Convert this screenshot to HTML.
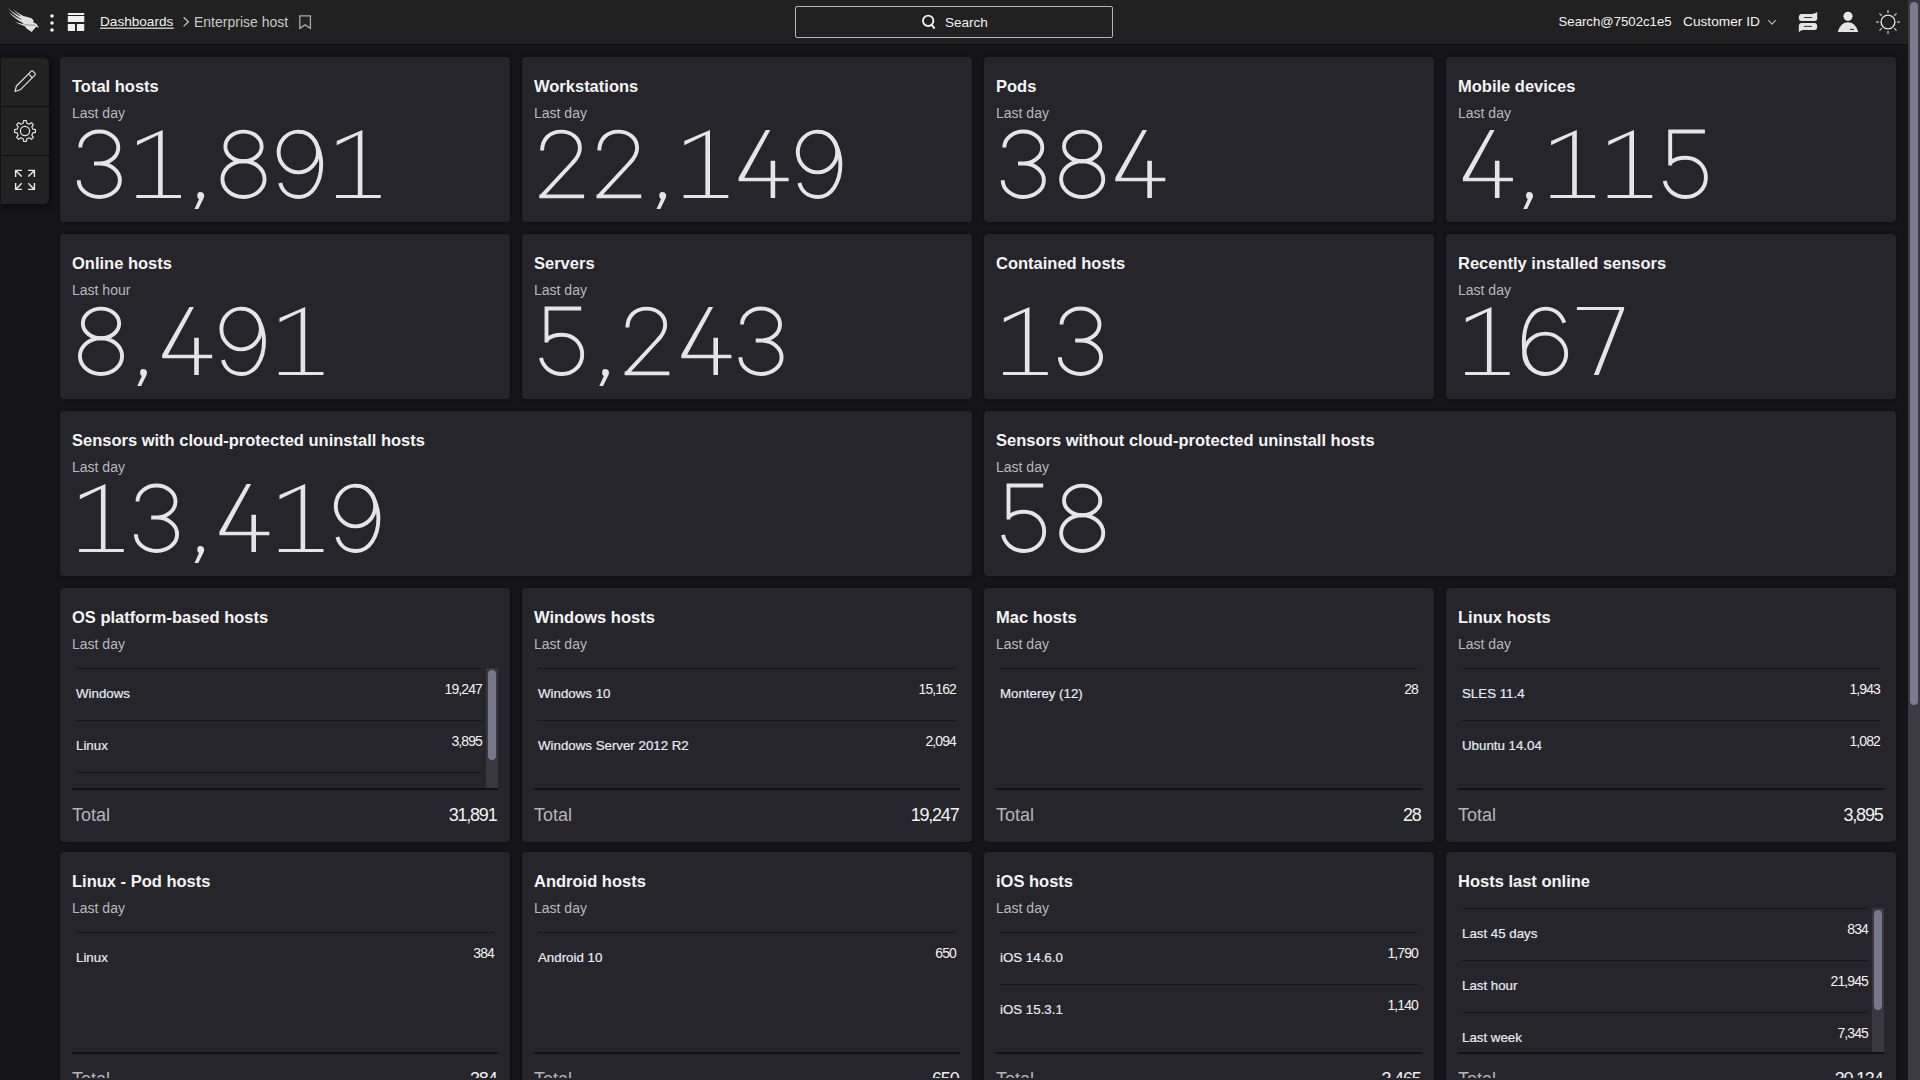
<!DOCTYPE html>
<html><head><meta charset="utf-8"><style>
*{margin:0;padding:0;box-sizing:border-box}
html,body{width:1920px;height:1080px;overflow:hidden;background:#141419;font-family:"Liberation Sans",sans-serif;color:#ececec}
#top{position:absolute;left:0;top:0;width:1908px;height:45px;background:#212121;border-bottom:1px solid #0c0c0f}
.t{position:absolute;white-space:nowrap;line-height:1}
#side{position:absolute;left:1px;top:58px;width:48px;height:146px;background:#222222;border-radius:0 5px 5px 0;box-shadow:2px 2px 6px rgba(0,0,0,.45)}
#side .dv{position:absolute;left:0;width:48px;height:1px;background:#101013}
.card{position:absolute;background:#26252b;border-radius:4px;overflow:hidden;box-shadow:0 0 3px rgba(0,0,0,.35)}
.ttl{position:absolute;left:12px;top:19.7px;font-weight:bold;font-size:16.5px;line-height:19px;color:#f4f4f4;white-space:nowrap}
.sub{position:absolute;left:12px;top:48px;font-size:14px;line-height:16px;color:#b9b9bd;white-space:nowrap}
.list{position:absolute;left:12px;width:426px;overflow:hidden}
.row{position:absolute;left:4px;right:4px;height:52px;border-top:1px solid #17171b}
.list.sc .row{right:16px}
.lab{position:absolute;left:0;top:16.5px;font-size:13.3px;line-height:15px;color:#e8eaf4;white-space:nowrap;-webkit-text-stroke:0.2px #e8eaf4}
.val{position:absolute;right:0;top:13px;font-size:14px;line-height:15px;color:#f2f2f2;white-space:nowrap;letter-spacing:-0.9px}
.strack{position:absolute;right:0;top:0;width:12px;height:100%;background:#38383e}
.sthumb{position:absolute;right:2px;top:2px;width:8px;border-radius:4px;background:#77778b}
.tsep{position:absolute;left:12px;top:199.5px;width:426px;height:2px;background:#121215}
.tot{position:absolute;left:12px;top:217px;font-size:18px;line-height:20px;color:#b4b4b8}
.totv{position:absolute;right:13.5px;top:217px;font-size:18px;line-height:20px;color:#f2f2f2;letter-spacing:-1.2px}
#big{position:absolute;left:0;top:0}
#big path,#big ellipse{stroke:#e5e5e7;fill:none}
#big path.f{stroke:none;fill:#e5e5e7}
#sb{position:absolute;left:1908px;top:0;width:12px;height:1080px;background:#3a3a40}
#sbt{position:absolute;left:1910px;top:2px;width:8px;height:703px;border-radius:4px;background:#7a7a90}
</style></head><body>
<div id="top">
 <div class="t" style="left:100px;top:15px;font-size:13.6px;color:#f2f2f2">Dashboards</div>
 <div class="t" style="left:194px;top:15px;font-size:14px;color:#c9c9c9">Enterprise host</div>
 <div id="search" style="position:absolute;left:795px;top:6px;width:318px;height:32px;border:1px solid #b4b4b4;border-radius:2px"></div>
 <div class="t" style="left:945px;top:15.5px;font-size:13.5px;color:#f2f2f2">Search</div>
 <div class="t" style="left:1558.5px;top:15px;font-size:13.2px;color:#f2f2f2">Search@7502c1e5</div>
 <div class="t" style="left:1683px;top:15px;font-size:13.7px;color:#f2f2f2">Customer ID</div>
</div>
<div id="side"><div class="dv" style="top:48px"></div><div class="dv" style="top:97px"></div></div>

<svg style="position:absolute;left:0;top:0" width="1920" height="210" viewBox="0 0 1920 210">
 <g fill="#e2e2e2">
  <path d="M20.59,15.56 L26.52,16.74 L31.56,18.22 L33.63,20.59 L33.19,22.22 L36.30,23.85 L39.11,27.70 L36.00,26.81 L34.81,28.59 L33.63,29.48 L31.85,32.00 L29.78,30.67 L26.52,28.59 L24.74,25.93 L22.96,23.26 L21.78,20.59 Z"/>
  <path d="M7.85,7.85 Q13.78,13.78 22.07,17.04 L21.78,19.41 Q13.78,15.26 7.85,7.85 Z"/>
  <path d="M12.89,9.33 Q17.33,12.89 22.96,15.85 L22.37,17.33 Q17.04,13.78 12.89,9.33 Z"/>
  <path d="M9.04,12.30 Q15.85,17.93 22.96,20.59 L22.96,22.96 Q15.26,19.41 9.04,12.30 Z"/>
  <path d="M14.96,22.07 Q20.30,23.26 25.33,24.74 L25.63,26.52 Q20.00,24.74 14.96,22.07 Z"/>
 </g>
 <path d="M24.44,24.74 L35.41,25.33" stroke="#555" stroke-width="0.6"/>
 <g fill="#f0f0f0">
  <circle cx="52" cy="16" r="1.8"/><circle cx="52" cy="23" r="1.8"/><circle cx="52" cy="30" r="1.8"/>
  <rect x="67.8" y="12.9" width="16.5" height="2.1" rx="0.4"/>
  <rect x="67.8" y="16" width="16.5" height="6" rx="0.5"/>
  <rect x="67.8" y="23.9" width="7.2" height="7.1" rx="0.5"/>
  <rect x="76.9" y="23.9" width="7.35" height="7.1" rx="0.5"/>
 </g>
 <path d="M183.6,17.2 L188.4,21.8 L183.6,26.4" stroke="#c8c8c8" stroke-width="1.2" fill="none"/>
 <path d="M299.8,15.8 H310.4 V28.4 L305.1,24.9 L299.8,28.4 Z" stroke="#a9a9a9" stroke-width="1.3" fill="none" stroke-linejoin="miter"/>
 <rect x="100" y="27.6" width="73.8" height="1.2" fill="#e8e8e8"/>
 <circle cx="928.2" cy="20.8" r="5.2" stroke="#f0f0f0" stroke-width="1.9" fill="none"/>
 <path d="M931.6,24.6 L934.6,28.6" stroke="#f0f0f0" stroke-width="2" fill="none"/>
 <path d="M1768.3,20.2 L1772,24.2 L1775.7,20.2" stroke="#c0c0c0" stroke-width="1.1" fill="none"/>
 <g fill="#e4e4e4">
  <path d="M1801.5,14 H1811 Q1815,14 1817.2,11.9 V18.5 Q1817.2,21 1814.5,21 H1801.5 Q1798.8,21 1798.8,17.5 Q1798.8,14 1801.5,14 Z"/>
  <path d="M1801.5,23 H1814.5 Q1817.2,23 1817.2,26.5 Q1817.2,30 1814.5,30 H1803 Q1800,30.3 1798.8,32.2 V26.5 Q1798.8,23 1801.5,23 Z"/>
 </g>
 <g stroke="#1f1f1f" stroke-width="0.9"><path d="M1804,17.5 H1812"/><path d="M1804,26.4 H1812"/></g>
 <circle cx="1848" cy="16.3" r="4.6" fill="#e4e4e4"/>
 <path d="M1837.8,32 Q1840.5,22.2 1848,22.2 Q1855.5,22.2 1858.2,32 Z" fill="#e4e4e4"/>
 <path d="M1850,29.4 H1854" stroke="#1f1f1f" stroke-width="1"/>
 <circle cx="1888" cy="22" r="6.9" stroke="#e4e4e4" stroke-width="1.4" fill="none"/>
 <g stroke="#bdbdbd" stroke-width="1.3">
  <path d="M1888,10 V13"/><path d="M1888,31 V34"/><path d="M1876,22 H1879"/><path d="M1897,22 H1900"/>
  <path d="M1879.4,13.4 L1881.8,15.8"/><path d="M1894.2,28.2 L1896.6,30.6"/><path d="M1896.6,13.4 L1894.2,15.8"/><path d="M1881.8,28.2 L1879.4,30.6"/>
 </g>
 <g stroke="#e0e0e0" stroke-width="1.2" fill="none" stroke-linejoin="round">
  <path d="M16.4,86 L31.1,71.3 Q32.1,70.4 33.1,71.3 L34.9,73.1 Q35.8,74.1 34.9,75.1 L20.2,89.8 L15,91.5 Z"/>
  <path d="M28.5,73.9 L32.1,77.5"/>
  <path d="M23.13,123.22 L23.60,120.59 L26.40,120.59 L26.87,123.22 L29.18,124.18 L31.37,122.65 L33.35,124.63 L31.82,126.82 L32.78,129.13 L35.41,129.60 L35.41,132.40 L32.78,132.87 L31.82,135.18 L33.35,137.37 L31.37,139.35 L29.18,137.82 L26.87,138.78 L26.40,141.41 L23.60,141.41 L23.13,138.78 L20.82,137.82 L18.63,139.35 L16.65,137.37 L18.18,135.18 L17.22,132.87 L14.59,132.40 L14.59,129.60 L17.22,129.13 L18.18,126.82 L16.65,124.63 L18.63,122.65 L20.82,124.18 Z"/>
  <circle cx="25" cy="131" r="4.6"/>
 </g>
 <g stroke="#ececec" stroke-width="1.4" fill="none">
  <path d="M15.6,176.9 V170.4 H21.9 M15.6,170.4 L21.7,176.5"/>
  <path d="M28.1,170.4 H34.4 V176.9 M34.4,170.4 L28.3,176.5"/>
  <path d="M15.6,183.1 V189.4 H21.9 M15.6,189.4 L21.7,183.3"/>
  <path d="M28.1,189.4 H34.4 V183.1 M34.4,189.4 L28.3,183.3"/>
 </g>
</svg>
<div class="card" style="left:60px;top:57px;width:450px;height:165px"><div class="ttl">Total hosts</div><div class="sub">Last day</div></div>
<div class="card" style="left:522px;top:57px;width:450px;height:165px"><div class="ttl">Workstations</div><div class="sub">Last day</div></div>
<div class="card" style="left:984px;top:57px;width:450px;height:165px"><div class="ttl">Pods</div><div class="sub">Last day</div></div>
<div class="card" style="left:1446px;top:57px;width:450px;height:165px"><div class="ttl">Mobile devices</div><div class="sub">Last day</div></div>
<div class="card" style="left:60px;top:234px;width:450px;height:165px"><div class="ttl">Online hosts</div><div class="sub">Last hour</div></div>
<div class="card" style="left:522px;top:234px;width:450px;height:165px"><div class="ttl">Servers</div><div class="sub">Last day</div></div>
<div class="card" style="left:984px;top:234px;width:450px;height:165px"><div class="ttl">Contained hosts</div><div class="sub"></div></div>
<div class="card" style="left:1446px;top:234px;width:450px;height:165px"><div class="ttl">Recently installed sensors</div><div class="sub">Last day</div></div>
<div class="card" style="left:60px;top:411px;width:912px;height:165px"><div class="ttl">Sensors with cloud-protected uninstall hosts</div><div class="sub">Last day</div></div>
<div class="card" style="left:984px;top:411px;width:912px;height:165px"><div class="ttl">Sensors without cloud-protected uninstall hosts</div><div class="sub">Last day</div></div>
<div class="card" style="left:60px;top:588px;width:450px;height:254px"><div class="ttl">OS platform-based hosts</div><div class="sub">Last day</div><div class="list sc" style="top:80px;height:120px"><div class="row" style="top:0px"><span class="lab">Windows</span><span class="val">19,247</span></div><div class="row" style="top:52px"><span class="lab">Linux</span><span class="val">3,895</span></div><div class="row" style="top:104px"><span class="lab">Mac</span><span class="val">28</span></div><div class="strack"></div><div class="sthumb" style="height:90px"></div></div><div class="tsep"></div><div class="tot">Total</div><div class="totv">31,891</div></div>
<div class="card" style="left:522px;top:588px;width:450px;height:254px"><div class="ttl">Windows hosts</div><div class="sub">Last day</div><div class="list" style="top:80px;height:120px"><div class="row" style="top:0px"><span class="lab">Windows 10</span><span class="val">15,162</span></div><div class="row" style="top:52px"><span class="lab">Windows Server 2012 R2</span><span class="val">2,094</span></div></div><div class="tsep"></div><div class="tot">Total</div><div class="totv">19,247</div></div>
<div class="card" style="left:984px;top:588px;width:450px;height:254px"><div class="ttl">Mac hosts</div><div class="sub">Last day</div><div class="list" style="top:80px;height:120px"><div class="row" style="top:0px"><span class="lab">Monterey (12)</span><span class="val">28</span></div></div><div class="tsep"></div><div class="tot">Total</div><div class="totv">28</div></div>
<div class="card" style="left:1446px;top:588px;width:450px;height:254px"><div class="ttl">Linux hosts</div><div class="sub">Last day</div><div class="list" style="top:80px;height:120px"><div class="row" style="top:0px"><span class="lab">SLES 11.4</span><span class="val">1,943</span></div><div class="row" style="top:52px"><span class="lab">Ubuntu 14.04</span><span class="val">1,082</span></div></div><div class="tsep"></div><div class="tot">Total</div><div class="totv">3,895</div></div>
<div class="card" style="left:60px;top:852px;width:450px;height:254px"><div class="ttl">Linux - Pod hosts</div><div class="sub">Last day</div><div class="list" style="top:80px;height:120px"><div class="row" style="top:0px"><span class="lab">Linux</span><span class="val">384</span></div></div><div class="tsep"></div><div class="tot">Total</div><div class="totv">384</div></div>
<div class="card" style="left:522px;top:852px;width:450px;height:254px"><div class="ttl">Android hosts</div><div class="sub">Last day</div><div class="list" style="top:80px;height:120px"><div class="row" style="top:0px"><span class="lab">Android 10</span><span class="val">650</span></div></div><div class="tsep"></div><div class="tot">Total</div><div class="totv">650</div></div>
<div class="card" style="left:984px;top:852px;width:450px;height:254px"><div class="ttl">iOS hosts</div><div class="sub">Last day</div><div class="list" style="top:80px;height:120px"><div class="row" style="top:0px"><span class="lab">iOS 14.6.0</span><span class="val">1,790</span></div><div class="row" style="top:52px"><span class="lab">iOS 15.3.1</span><span class="val">1,140</span></div></div><div class="tsep"></div><div class="tot">Total</div><div class="totv">3,465</div></div>
<div class="card" style="left:1446px;top:852px;width:450px;height:254px"><div class="ttl">Hosts last online</div><div class="sub"></div><div class="list sc" style="top:56px;height:144px"><div class="row" style="top:0px"><span class="lab">Last 45 days</span><span class="val">834</span></div><div class="row" style="top:52px"><span class="lab">Last hour</span><span class="val">21,945</span></div><div class="row" style="top:104px"><span class="lab">Last week</span><span class="val">7,345</span></div><div class="strack"></div><div class="sthumb" style="height:100px"></div></div><div class="tsep"></div><div class="tot">Total</div><div class="totv">30,134</div></div>
<svg id="big" width="1920" height="1080" viewBox="0 0 1920 1080" style="stroke-width:3.90"><g transform="translate(72.00,126.00)"><path d="M8.3,21.5 A19,16 0 1 1 27.3,37.5 M22,37.5 H27.3 A20.6,16.75 0 1 1 6.7,54.25" fill="none"/></g><g transform="translate(129.20,126.00)"><path class="f" d="M33.5,3.9 V69 H51.8 V72.1 H7.1 V69 H28.9 V9.0 L7.8,19.3 V14.9 Z"/></g><g transform="translate(186.40,126.00)"><path class="f" d="M13.5,65.9 C16.5,65.9 17.8,67.5 17.8,69.5 C17.8,71 17.3,72 16.6,73.5 L11.9,83 H8.1 L12.6,73 C11.5,72.5 10.9,71.3 10.9,69.3 C10.9,67.3 11.9,65.9 13.5,65.9 Z"/></g><g transform="translate(214.50,126.00)"><ellipse cx="29" cy="20.4" rx="18.15" ry="14.8" fill="none"/><ellipse cx="29" cy="53.1" rx="21.1" ry="17.9" fill="none"/></g><g transform="translate(271.70,126.00)"><ellipse cx="26.6" cy="26" rx="19.7" ry="20.4" fill="none"/><path d="M26.6,5.6 A19.7,20.4 0 0 1 43.7,16 C46.6,21.4 49.5,28 49.5,38 C49.5,57 40,71 27.5,71 C17,71 10.5,65 8.5,57" fill="none"/></g><g transform="translate(328.90,126.00)"><path class="f" d="M33.5,3.9 V69 H51.8 V72.1 H7.1 V69 H28.9 V9.0 L7.8,19.3 V14.9 Z"/></g><g transform="translate(534.00,126.00)"><path d="M8.1,24.6 C8.1,13 16,5.6 27,5.6 C38,5.6 45.9,12.5 45.9,22 C45.9,28 43,32.5 38,37.5 L7.5,70.35 M5.3,70.35 H50.1" fill="none"/></g><g transform="translate(591.20,126.00)"><path d="M8.1,24.6 C8.1,13 16,5.6 27,5.6 C38,5.6 45.9,12.5 45.9,22 C45.9,28 43,32.5 38,37.5 L7.5,70.35 M5.3,70.35 H50.1" fill="none"/></g><g transform="translate(648.40,126.00)"><path class="f" d="M13.5,65.9 C16.5,65.9 17.8,67.5 17.8,69.5 C17.8,71 17.3,72 16.6,73.5 L11.9,83 H8.1 L12.6,73 C11.5,72.5 10.9,71.3 10.9,69.3 C10.9,67.3 11.9,65.9 13.5,65.9 Z"/></g><g transform="translate(676.50,126.00)"><path class="f" d="M33.5,3.9 V69 H51.8 V72.1 H7.1 V69 H28.9 V9.0 L7.8,19.3 V14.9 Z"/></g><g transform="translate(733.70,126.00)"><path class="f" d="M32.1,3.9 H36.6 L10.6,51.7 H36.9 V34.8 H41.5 V51.7 H54.9 V55.2 H41.5 V72.1 H36.9 V55.2 H4.9 V51.7 Z"/></g><g transform="translate(790.90,126.00)"><ellipse cx="26.6" cy="26" rx="19.7" ry="20.4" fill="none"/><path d="M26.6,5.6 A19.7,20.4 0 0 1 43.7,16 C46.6,21.4 49.5,28 49.5,38 C49.5,57 40,71 27.5,71 C17,71 10.5,65 8.5,57" fill="none"/></g><g transform="translate(996.00,126.00)"><path d="M8.3,21.5 A19,16 0 1 1 27.3,37.5 M22,37.5 H27.3 A20.6,16.75 0 1 1 6.7,54.25" fill="none"/></g><g transform="translate(1053.20,126.00)"><ellipse cx="29" cy="20.4" rx="18.15" ry="14.8" fill="none"/><ellipse cx="29" cy="53.1" rx="21.1" ry="17.9" fill="none"/></g><g transform="translate(1110.40,126.00)"><path class="f" d="M32.1,3.9 H36.6 L10.6,51.7 H36.9 V34.8 H41.5 V51.7 H54.9 V55.2 H41.5 V72.1 H36.9 V55.2 H4.9 V51.7 Z"/></g><g transform="translate(1458.00,126.00)"><path class="f" d="M32.1,3.9 H36.6 L10.6,51.7 H36.9 V34.8 H41.5 V51.7 H54.9 V55.2 H41.5 V72.1 H36.9 V55.2 H4.9 V51.7 Z"/></g><g transform="translate(1515.20,126.00)"><path class="f" d="M13.5,65.9 C16.5,65.9 17.8,67.5 17.8,69.5 C17.8,71 17.3,72 16.6,73.5 L11.9,83 H8.1 L12.6,73 C11.5,72.5 10.9,71.3 10.9,69.3 C10.9,67.3 11.9,65.9 13.5,65.9 Z"/></g><g transform="translate(1543.30,126.00)"><path class="f" d="M33.5,3.9 V69 H51.8 V72.1 H7.1 V69 H28.9 V9.0 L7.8,19.3 V14.9 Z"/></g><g transform="translate(1600.50,126.00)"><path class="f" d="M33.5,3.9 V69 H51.8 V72.1 H7.1 V69 H28.9 V9.0 L7.8,19.3 V14.9 Z"/></g><g transform="translate(1657.70,126.00)"><path d="M47.2,5.45 H12.5 V39.5 M12.9,36.6 C16.5,33.3 21.5,31.7 28,31.7 C39.5,31.7 48.2,40.5 48.2,51.4 C48.2,62.5 39.5,71 28,71 C17,71 9,64 7,54.9" fill="none"/></g><g transform="translate(72.00,303.00)"><ellipse cx="29" cy="20.4" rx="18.15" ry="14.8" fill="none"/><ellipse cx="29" cy="53.1" rx="21.1" ry="17.9" fill="none"/></g><g transform="translate(129.20,303.00)"><path class="f" d="M13.5,65.9 C16.5,65.9 17.8,67.5 17.8,69.5 C17.8,71 17.3,72 16.6,73.5 L11.9,83 H8.1 L12.6,73 C11.5,72.5 10.9,71.3 10.9,69.3 C10.9,67.3 11.9,65.9 13.5,65.9 Z"/></g><g transform="translate(157.30,303.00)"><path class="f" d="M32.1,3.9 H36.6 L10.6,51.7 H36.9 V34.8 H41.5 V51.7 H54.9 V55.2 H41.5 V72.1 H36.9 V55.2 H4.9 V51.7 Z"/></g><g transform="translate(214.50,303.00)"><ellipse cx="26.6" cy="26" rx="19.7" ry="20.4" fill="none"/><path d="M26.6,5.6 A19.7,20.4 0 0 1 43.7,16 C46.6,21.4 49.5,28 49.5,38 C49.5,57 40,71 27.5,71 C17,71 10.5,65 8.5,57" fill="none"/></g><g transform="translate(271.70,303.00)"><path class="f" d="M33.5,3.9 V69 H51.8 V72.1 H7.1 V69 H28.9 V9.0 L7.8,19.3 V14.9 Z"/></g><g transform="translate(534.00,303.00)"><path d="M47.2,5.45 H12.5 V39.5 M12.9,36.6 C16.5,33.3 21.5,31.7 28,31.7 C39.5,31.7 48.2,40.5 48.2,51.4 C48.2,62.5 39.5,71 28,71 C17,71 9,64 7,54.9" fill="none"/></g><g transform="translate(591.20,303.00)"><path class="f" d="M13.5,65.9 C16.5,65.9 17.8,67.5 17.8,69.5 C17.8,71 17.3,72 16.6,73.5 L11.9,83 H8.1 L12.6,73 C11.5,72.5 10.9,71.3 10.9,69.3 C10.9,67.3 11.9,65.9 13.5,65.9 Z"/></g><g transform="translate(619.30,303.00)"><path d="M8.1,24.6 C8.1,13 16,5.6 27,5.6 C38,5.6 45.9,12.5 45.9,22 C45.9,28 43,32.5 38,37.5 L7.5,70.35 M5.3,70.35 H50.1" fill="none"/></g><g transform="translate(676.50,303.00)"><path class="f" d="M32.1,3.9 H36.6 L10.6,51.7 H36.9 V34.8 H41.5 V51.7 H54.9 V55.2 H41.5 V72.1 H36.9 V55.2 H4.9 V51.7 Z"/></g><g transform="translate(733.70,303.00)"><path d="M8.3,21.5 A19,16 0 1 1 27.3,37.5 M22,37.5 H27.3 A20.6,16.75 0 1 1 6.7,54.25" fill="none"/></g><g transform="translate(996.00,303.00)"><path class="f" d="M33.5,3.9 V69 H51.8 V72.1 H7.1 V69 H28.9 V9.0 L7.8,19.3 V14.9 Z"/></g><g transform="translate(1053.20,303.00)"><path d="M8.3,21.5 A19,16 0 1 1 27.3,37.5 M22,37.5 H27.3 A20.6,16.75 0 1 1 6.7,54.25" fill="none"/></g><g transform="translate(1458.00,303.00)"><path class="f" d="M33.5,3.9 V69 H51.8 V72.1 H7.1 V69 H28.9 V9.0 L7.8,19.3 V14.9 Z"/></g><g transform="translate(1515.20,303.00)"><ellipse cx="30" cy="50.8" rx="21" ry="20.2" fill="none"/><path d="M30,71 A21,20.2 0 0 1 12.9,60.9 C10,55 8.6,48 8.6,40 C8.6,19 17.5,5.6 30,5.6 C39,5.6 45.5,10.5 49.2,19.7" fill="none"/></g><g transform="translate(1572.40,303.00)"><path class="f" d="M4.5,3.9 H51.7 V6.5 L26.3,72.1 H21.4 L47.1,7.0 H4.5 Z"/></g><g transform="translate(72.00,480.00)"><path class="f" d="M33.5,3.9 V69 H51.8 V72.1 H7.1 V69 H28.9 V9.0 L7.8,19.3 V14.9 Z"/></g><g transform="translate(129.20,480.00)"><path d="M8.3,21.5 A19,16 0 1 1 27.3,37.5 M22,37.5 H27.3 A20.6,16.75 0 1 1 6.7,54.25" fill="none"/></g><g transform="translate(186.40,480.00)"><path class="f" d="M13.5,65.9 C16.5,65.9 17.8,67.5 17.8,69.5 C17.8,71 17.3,72 16.6,73.5 L11.9,83 H8.1 L12.6,73 C11.5,72.5 10.9,71.3 10.9,69.3 C10.9,67.3 11.9,65.9 13.5,65.9 Z"/></g><g transform="translate(214.50,480.00)"><path class="f" d="M32.1,3.9 H36.6 L10.6,51.7 H36.9 V34.8 H41.5 V51.7 H54.9 V55.2 H41.5 V72.1 H36.9 V55.2 H4.9 V51.7 Z"/></g><g transform="translate(271.70,480.00)"><path class="f" d="M33.5,3.9 V69 H51.8 V72.1 H7.1 V69 H28.9 V9.0 L7.8,19.3 V14.9 Z"/></g><g transform="translate(328.90,480.00)"><ellipse cx="26.6" cy="26" rx="19.7" ry="20.4" fill="none"/><path d="M26.6,5.6 A19.7,20.4 0 0 1 43.7,16 C46.6,21.4 49.5,28 49.5,38 C49.5,57 40,71 27.5,71 C17,71 10.5,65 8.5,57" fill="none"/></g><g transform="translate(996.00,480.00)"><path d="M47.2,5.45 H12.5 V39.5 M12.9,36.6 C16.5,33.3 21.5,31.7 28,31.7 C39.5,31.7 48.2,40.5 48.2,51.4 C48.2,62.5 39.5,71 28,71 C17,71 9,64 7,54.9" fill="none"/></g><g transform="translate(1053.20,480.00)"><ellipse cx="29" cy="20.4" rx="18.15" ry="14.8" fill="none"/><ellipse cx="29" cy="53.1" rx="21.1" ry="17.9" fill="none"/></g></svg>
<div style="position:absolute;left:60px;top:1078px;width:450px;height:2px;background:#26252b"></div><div style="position:absolute;left:522px;top:1078px;width:450px;height:2px;background:#26252b"></div><div style="position:absolute;left:984px;top:1078px;width:450px;height:2px;background:#26252b"></div><div style="position:absolute;left:1446px;top:1078px;width:450px;height:2px;background:#26252b"></div>
<div id="sb"></div><div id="sbt"></div>
</body></html>
